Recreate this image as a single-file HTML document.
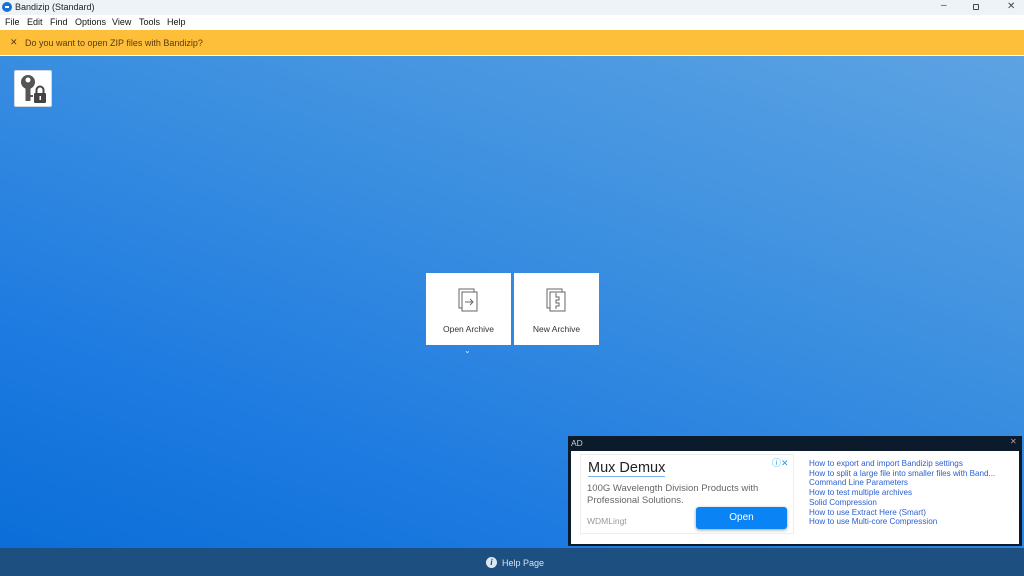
<!DOCTYPE html>
<html><head><style>
*{margin:0;padding:0;box-sizing:border-box}
body{width:1024px;height:576px;overflow:hidden;font-family:"Liberation Sans",sans-serif;position:relative;background:#fff}
.abs{position:absolute}
#title{left:0;top:0;width:1024px;height:15px;background:#eef3f8;font-size:9px;color:#222}
#menu{left:0;top:15px;width:1024px;height:15px;background:#fff;font-size:9px;color:#111}
#menu span{position:absolute;top:2px}
#yb{left:0;top:30px;width:1024px;height:25px;background:#fdbf3a;font-size:9px;color:#5a3a10}
#main{left:0;top:56px;width:1024px;height:492px;background:linear-gradient(200deg,#5da3e3 0%,#3b8fe0 40%,#1d7ae0 75%,#0b6ed8 100%)}
#foot{left:0;top:548px;width:1024px;height:28px;background:#1d4f80;color:#d5e2ef;font-size:9px}
.tile{background:#fff;width:85px;height:72px;top:273px;font-size:8.5px;color:#333;text-align:center}
#ad{left:568px;top:436px;width:454px;height:110px;background:#0c1b2b}
a{color:#2a5fd0;text-decoration:none}
</style></head><body>
<div id="title" class="abs">
<div class="abs" style="left:2px;top:2px;width:10px;height:10px;border-radius:50%;background:#1670d8"></div>
<div class="abs" style="left:5px;top:6px;width:4px;height:2px;background:#fff"></div>
<span class="abs" style="left:15px;top:2px">Bandizip (Standard)</span>
<span class="abs" style="left:941px;top:0px;font-size:10px;color:#444">–</span>
<div class="abs" style="left:973px;top:4px;width:6px;height:6px;border:1.5px solid #444;border-radius:1px"></div>
<span class="abs" style="left:1007px;top:1px;font-size:10px;color:#444">✕</span>
</div>
<div id="menu" class="abs">
<span style="left:5px">File</span><span style="left:27px">Edit</span><span style="left:50px">Find</span><span style="left:75px">Options</span><span style="left:112px">View</span><span style="left:139px">Tools</span><span style="left:167px">Help</span>
</div>
<div id="yb" class="abs"><span class="abs" style="left:10px;top:7px">✕</span><span class="abs" style="left:25px;top:8px">Do you want to open ZIP files with Bandizip?</span></div>
<div id="main" class="abs">
<div class="abs" style="left:14px;top:14px;width:38px;height:37px;background:#fff;border-radius:2px;border:1px solid #cfd8e0">
<svg width="38" height="37" viewBox="0 0 38 37"><circle cx="13" cy="11" r="7" fill="#555"/><circle cx="13" cy="9" r="2.5" fill="#fff"/><rect x="10.5" y="15" width="5" height="15" fill="#555"/><rect x="15" y="24" width="3" height="2" fill="#555"/><rect x="19" y="22" width="12" height="10" rx="1" fill="#444"/><path d="M21.5 22v-3a3.5 3.5 0 0 1 7 0v3" stroke="#444" stroke-width="2" fill="none"/><rect x="24.5" y="25" width="1.5" height="4" fill="#fff"/></svg></div>
</div>
<div class="abs tile" style="left:426px">
<svg class="abs" style="left:30px;top:14px" width="26" height="28" viewBox="0 0 26 28" fill="none" stroke="#666" stroke-width="1"><rect x="3" y="2" width="15" height="19"/><rect x="6" y="5" width="15" height="19" fill="#fff"/><path d="M9 15h8M14 12l3 3-3 3"/></svg>
<div class="abs" style="left:0;width:85px;top:51px">Open Archive</div></div>
<div class="abs tile" style="left:514px">
<svg class="abs" style="left:30px;top:14px" width="26" height="28" viewBox="0 0 26 28" fill="none" stroke="#666" stroke-width="1"><rect x="3" y="2" width="15" height="19"/><rect x="6" y="5" width="15" height="19" fill="#fff"/><path d="M12 6v4h3v3h-3v3h3v3h-3v3"/></svg>
<div class="abs" style="left:0;width:85px;top:51px">New Archive</div></div>
<span class="abs" style="left:464px;top:346px;color:#e0ecf8;font-size:8px">⌄</span>
<div id="ad" class="abs">
<span class="abs" style="left:3px;top:2px;color:#ccc;font-size:8.5px">AD</span>
<span class="abs" style="left:442px;top:1px;color:#aaa;font-size:8px">✕</span>
<div class="abs" style="left:3px;top:15px;width:448px;height:93px;background:#fff">
<div class="abs" style="left:9px;top:3px;width:214px;height:80px;border:1px solid #eee">
<div class="abs" style="left:7px;top:5px;font-size:14.5px;color:#222;border-bottom:1.5px solid #7ab0f0">Mux Demux</div>
<span class="abs" style="left:191px;top:1px;color:#2a9ae0;font-size:9px">ⓘ✕</span>
<div class="abs" style="left:6px;top:28px;font-size:9.5px;color:#666;line-height:12px">100G Wavelength Division Products with<br>Professional Solutions.</div>
<div class="abs" style="left:6px;top:61px;font-size:8.5px;color:#999">WDMLingt</div>
<div class="abs" style="left:115px;top:52px;width:91px;height:22px;background:#0a84f5;border-radius:3px;color:#fff;font-size:10px;text-align:center;line-height:22px;box-shadow:0 1px 3px #999">Open</div>
</div>
<div class="abs" style="left:238px;top:8px;font-size:8.1px;line-height:9.7px"><a>How to export and import Bandizip settings</a><br><a>How to split a large file into smaller files with Band...</a><br><a>Command Line Parameters</a><br><a>How to test multiple archives</a><br><a>Solid Compression</a><br><a>How to use Extract Here (Smart)</a><br><a>How to use Multi-core Compression</a></div>
</div></div>
<div id="foot" class="abs">
<div class="abs" style="left:486px;top:9px;width:11px;height:11px;border-radius:50%;background:#dfe8f2;color:#1d4f80;font-size:9px;font-style:italic;font-weight:bold;text-align:center;line-height:11px;font-family:'Liberation Serif',serif">i</div>
<span class="abs" style="left:502px;top:10px">Help Page</span></div>
</body></html>
